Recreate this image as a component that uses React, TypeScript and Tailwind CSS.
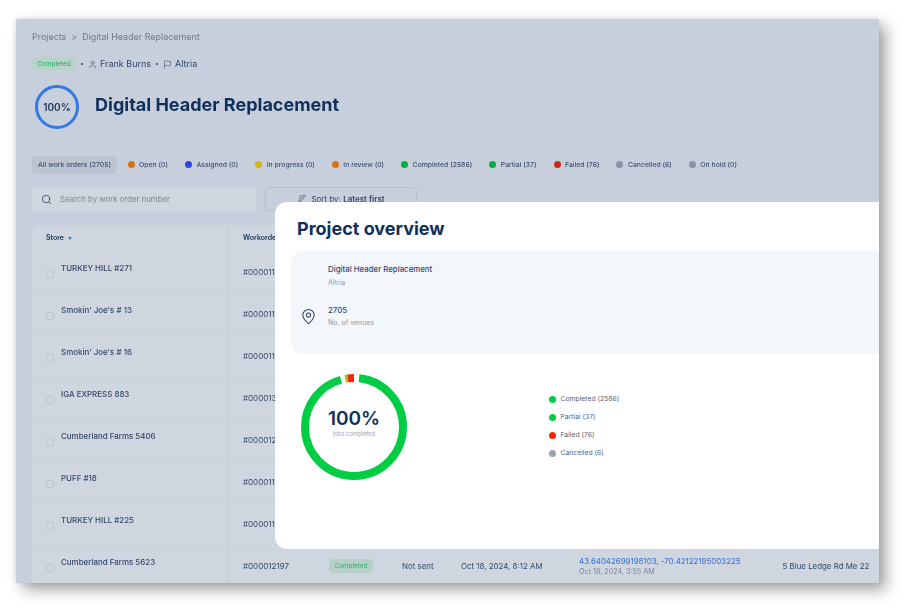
import { ArrowDownWideNarrow, Flag, MapPin, Search, User } from "lucide-react";

const filters = [
  { label: "Open (0)", dot: "bg-[#d9730d]", left: "ml-[10.5px]" },
  { label: "Assigned (0)", dot: "bg-[#2c44e0]", left: "ml-[17px]" },
  { label: "In progress (0)", dot: "bg-[#d4b806]", left: "ml-[17px]" },
  { label: "In review (0)", dot: "bg-[#d9730d]", left: "ml-[17px]" },
  { label: "Completed (2586)", dot: "bg-[#00b140]", left: "ml-[17px]" },
  { label: "Partial (37)", dot: "bg-[#00b140]", left: "ml-[17px]" },
  { label: "Failed (76)", dot: "bg-[#d0280f]", left: "ml-[17px]" },
  { label: "Cancelled (6)", dot: "bg-[#8895a8]", left: "ml-[17px]" },
  { label: "On hold (0)", dot: "bg-[#8895a8]", left: "ml-[17px]" },
];

const rows = [
  { store: "TURKEY HILL #271", order: "#000011842" },
  { store: "Smokin' Joe's # 13", order: "#000011907" },
  { store: "Smokin' Joe's # 16", order: "#000011913" },
  { store: "IGA EXPRESS 883", order: "#000013024" },
  { store: "Cumberland Farms 5406", order: "#000012266" },
  { store: "PUFF #18", order: "#000011758" },
  { store: "TURKEY HILL #225", order: "#000011831" },
  { store: "Cumberland Farms 5623", order: "#000012197" },
];

const legend = [
  { label: "Completed (2586)", dot: "bg-[#00cc44]" },
  { label: "Partial (37)", dot: "bg-[#00cc44]" },
  { label: "Failed (76)", dot: "bg-[#f5290a]" },
  { label: "Cancelled (6)", dot: "bg-[#9aa5b5]" },
];

function Donut() {
  const r = 49;
  const c = 2 * Math.PI * r;
  // angles are clockwise from the top, the svg itself is turned -90deg
  const arc = (from: number, to: number) => ({
    strokeDasharray: `${((to - from) / 360) * c} ${c}`,
    strokeDashoffset: -(from / 360) * c,
  });
  return (
    <svg width="108" height="108" viewBox="0 0 108 108" className="shrink-0 -rotate-90">
      <circle cx="54" cy="54" r={r} fill="none" stroke="#00cc44" strokeWidth="8" style={arc(6, 344)} />
      <circle cx="54" cy="54" r={r} fill="none" stroke="#a6c81e" strokeWidth="8" style={arc(349, 352)} />
      <circle cx="54" cy="54" r={r} fill="none" stroke="#f5290a" strokeWidth="8" style={arc(352, 360)} />
    </svg>
  );
}

function Overview() {
  return (
    <div className="absolute left-[259px] top-[183px] right-0 bottom-[34px] rounded-l-xl bg-white pl-4 pt-[15px]">
      <h2 className="ml-[6px] text-[18px] leading-[24px] font-bold text-[#0f2f5c]">Project overview</h2>
      <div className="mt-[10px] h-[103px] rounded-l-xl bg-[#f3f6fb] pl-[37px] pt-[12px]">
        <p className="text-[7.85px] leading-[12px] font-medium text-[#33486b]">Digital Header Replacement</p>
        <p className="mt-[2px] text-[7px] leading-[12px] text-[#8f9bac]">Altria</p>
        <div className="relative mt-[15px]">
          <MapPin className="absolute left-[-28px] top-[4px] size-[17px] text-[#33486b]" strokeWidth={1.5} />
          <p className="text-[7.85px] leading-[12px] font-medium text-[#33486b]">2705</p>
          <p className="mt-[1px] text-[7px] leading-[12px] text-[#8f9bac]">No. of venues</p>
        </div>
      </div>
      <div className="ml-[9px] mt-[19px] flex items-start">
        <div className="relative">
          <Donut />
          <div className="absolute inset-0 flex flex-col items-center justify-center pb-2">
            <span className="text-[19px] leading-[22px] font-semibold text-[#0f2f5c]">100%</span>
            <span className="text-[5.8px] leading-[8px] text-[#9aa5b5]">jobs completed</span>
          </div>
        </div>
        <ul className="ml-[141px] mt-[20px] flex flex-col gap-[6px]">
          {legend.map((item) => (
            <li key={item.label} className="flex h-[12px] items-center">
              <span className={`size-[7px] rounded-full ${item.dot}`} />
              <span className="ml-[4.5px] text-[6.8px] text-[#52627c]">{item.label}</span>
            </li>
          ))}
        </ul>
      </div>
    </div>
  );
}

export default function App() {
  return (
    <div className="h-[609px] w-[905px] overflow-hidden bg-white pl-4 pt-[19px] font-['Inter',sans-serif]">
      <div className="relative h-[564px] w-[863px] overflow-hidden bg-[#c8cfdc] px-4 pt-[11px] shadow-[7px_7px_14px_rgba(0,0,0,0.35),0_0_6px_rgba(0,0,0,0.12)] blur-[0.3px]">
        <div className="flex h-[14px] items-center text-[8.95px] text-[#6e7a8d]">
          <span>Projects</span>
          <span className="mx-[5px]">&gt;</span>
          <span>Digital Header Replacement</span>
        </div>

        <div className="mt-[13px] flex h-[14px] items-center text-[9px] text-[#33486b]">
          <span className="flex h-[14px] w-[44px] items-center justify-center rounded-[4px] bg-[#b9d3ca] pt-[1px] text-[6.4px] font-medium text-[#25b864]">
            Completed
          </span>
          <span className="mx-[5px] size-[2px] rounded-full bg-[#33486b]" />
          <User className="size-[9px]" strokeWidth={1.5} />
          <span className="ml-[3px]">Frank Burns</span>
          <span className="mx-[5px] size-[2px] rounded-full bg-[#33486b]" />
          <Flag className="size-[9px]" strokeWidth={1.5} />
          <span className="ml-[3px]">Altria</span>
        </div>

        <div className="mt-[14px] flex items-center pl-[3px]">
          <div className="flex size-[44px] items-center justify-center rounded-full border-[3px] border-[#2f7ae5] text-[10px] font-semibold text-[#1c3760]">
            100%
          </div>
          <h1 className="ml-[16px] -mt-[6px] text-[18px] font-bold text-[#0f2f5c]">Digital Header Replacement</h1>
        </div>

        <div className="mt-[27px] flex h-[18px] items-center text-[6.85px] font-medium text-[#3c5073]">
          <span className="flex h-[18px] w-[85px] items-center justify-center rounded-[4px] bg-[#bcc4d1]">All work orders (2705)</span>
          {filters.map((filter) => (
            <span key={filter.label} className={`flex items-center ${filter.left}`}>
              <span className={`mb-[1px] mr-[4.5px] size-[7px] rounded-full ${filter.dot}`} />
              {filter.label}
            </span>
          ))}
        </div>

        <div className="mt-[13px] flex">
          <div className="flex h-[24px] w-[224px] items-center rounded-[4px] bg-[#d0d6df] pl-[9px] text-[7.8px] text-[#7a8698]">
            <Search className="size-[11px] text-[#1c3760]" strokeWidth={1.6} />
            <span className="ml-[8px] pt-[1px]">Search by work order number</span>
          </div>
          <div className="ml-[9px] flex h-[24px] w-[152px] items-center justify-center rounded-[4px] border border-[#b6bfcd] text-[8px] text-[#33486b]">
            <ArrowDownWideNarrow className="mr-[4px] size-[10px]" strokeWidth={1.5} />
            Sort by:&nbsp;<b className="font-semibold">Latest first</b>
          </div>
        </div>

        <div className="mt-[14px] w-[1000px] rounded-tl-lg bg-[#d0d6df]">
          <div className="flex h-[26px] items-center text-[7px] font-semibold text-[#1c3760]">
            <div className="flex w-[197px] items-center self-stretch border-r border-[#c6cdd8] pl-[14px]">
              Store
              <span className="ml-[4px] size-0 border-x-[2.5px] border-t-[3px] border-x-transparent border-t-[#2f7ae5]" />
            </div>
            <div className="pl-[14px]">Workorder</div>
          </div>
          {rows.map((row, i) => (
            <div key={row.store} className="flex h-[42px] border-b border-[#c9d0da]">
              <div className="flex w-[197px] border-r border-[#c6cdd8] pl-[14px]">
                <span className="mt-[19px] size-[8px] shrink-0 rounded-[1.5px] border border-[#bcc4d0]" />
                <span className="ml-[7px] mt-[11px] text-[7.95px] leading-[12px] font-medium text-[#33486b]">{row.store}</span>
              </div>
              <div className="w-[100px] pl-[14px] pt-[15px] text-[8px] leading-[12px] text-[#33486b]">{row.order}</div>
              {i === rows.length - 1 && (
                <div className="flex items-start text-[7.9px] text-[#33486b]">
                  <span className="mt-[14px] flex h-[14px] w-[44px] items-center justify-center rounded-[4px] bg-[#b5d0c8] pt-[1px] text-[6.4px] text-[#25b864]">
                    Completed
                  </span>
                  <span className="ml-[29px] mt-[14.5px] leading-[12px]">Not sent</span>
                  <span className="ml-[27.5px] mt-[14.5px] leading-[12px]">Oct 18, 2024, 8:12 AM</span>
                  <span className="ml-[36.5px] mt-[10px] flex flex-col">
                    <span className="leading-[12px] text-[#2f6fd6]">43.64042699198103, -70.42122195003225</span>
                    <span className="text-[7.2px] leading-[10px] text-[#7a8698]">Oct 18, 2024, 3:55 AM</span>
                  </span>
                  <span className="ml-[42px] mt-[14.5px] leading-[12px]">5 Blue Ledge Rd Me 22</span>
                </div>
              )}
            </div>
          ))}
        </div>

        <Overview />
      </div>
    </div>
  );
}
